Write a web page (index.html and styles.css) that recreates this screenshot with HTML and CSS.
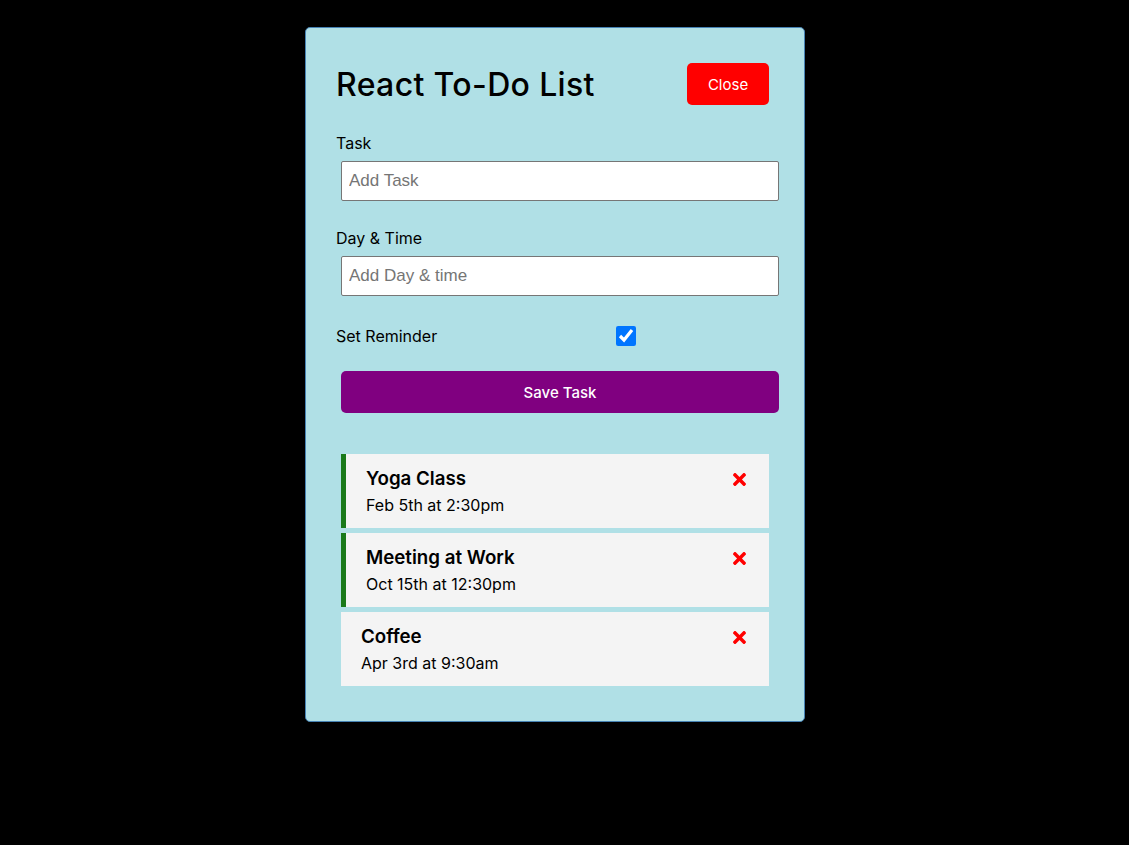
FILE: index.html
```html
<!DOCTYPE html>
<html lang="en">
<head>
<meta charset="utf-8">
<title>React To-Do List</title>
<link rel="stylesheet" href="styles.css">
</head>
<body>
<div class="container">
  <header class="header">
    <h1>React To-Do List</h1>
    <button class="btn btn-close">Close</button>
  </header>
  <form class="add-form">
    <div class="form-control">
      <label>Task</label>
      <input type="text" placeholder="Add Task">
    </div>
    <div class="form-control">
      <label>Day &amp; Time</label>
      <input type="text" placeholder="Add Day &amp; time">
    </div>
    <div class="form-control form-control-check">
      <label>Set Reminder</label>
      <div class="check-wrap"><input type="checkbox" checked></div>
    </div>
    <input type="submit" value="Save Task" class="btn btn-block">
  </form>
  <div class="task reminder">
    <h3>Yoga Class <svg class="times" viewBox="0 0 352 512"><path d="M242.72 256l100.07-100.07c12.28-12.28 12.28-32.19 0-44.48l-22.24-22.24c-12.28-12.28-32.19-12.28-44.48 0L176 189.28 75.93 89.21c-12.28-12.28-32.19-12.28-44.48 0L9.21 111.45c-12.28 12.28-12.28 32.19 0 44.48L109.28 256 9.21 356.07c-12.28 12.28-12.28 32.19 0 44.48l22.24 22.24c12.28 12.28 32.2 12.28 44.48 0L176 322.72l100.07 100.07c12.28 12.28 32.2 12.28 44.48 0l22.24-22.24c12.28-12.28 12.28-32.19 0-44.48L242.72 256z"/></svg></h3>
    <p>Feb 5th at 2:30pm</p>
  </div>
  <div class="task reminder">
    <h3>Meeting at Work <svg class="times" viewBox="0 0 352 512"><path d="M242.72 256l100.07-100.07c12.28-12.28 12.28-32.19 0-44.48l-22.24-22.24c-12.28-12.28-32.19-12.28-44.48 0L176 189.28 75.93 89.21c-12.28-12.28-32.19-12.28-44.48 0L9.21 111.45c-12.28 12.28-12.28 32.19 0 44.48L109.28 256 9.21 356.07c-12.28 12.28-12.28 32.19 0 44.48l22.24 22.24c12.28 12.28 32.2 12.28 44.48 0L176 322.72l100.07 100.07c12.28 12.28 32.2 12.28 44.48 0l22.24-22.24c12.28-12.28 12.28-32.19 0-44.48L242.72 256z"/></svg></h3>
    <p>Oct 15th at 12:30pm</p>
  </div>
  <div class="task">
    <h3>Coffee <svg class="times" viewBox="0 0 352 512"><path d="M242.72 256l100.07-100.07c12.28-12.28 12.28-32.19 0-44.48l-22.24-22.24c-12.28-12.28-32.19-12.28-44.48 0L176 189.28 75.93 89.21c-12.28-12.28-32.19-12.28-44.48 0L9.21 111.45c-12.28 12.28-12.28 32.19 0 44.48L109.28 256 9.21 356.07c-12.28 12.28-12.28 32.19 0 44.48l22.24 22.24c12.28 12.28 32.2 12.28 44.48 0L176 322.72l100.07 100.07c12.28 12.28 32.2 12.28 44.48 0l22.24-22.24c12.28-12.28 12.28-32.19 0-44.48L242.72 256z"/></svg></h3>
    <p>Apr 3rd at 9:30am</p>
  </div>
</div>
</body>
</html>
```
FILE: styles.css
```css
* {
  box-sizing: border-box;
  margin: 0;
  padding: 0;
}

body {
  background: #000;
  font-family: "Inter", "DejaVu Sans", sans-serif;
  color: #000;
  padding-right: 19px;
}

.container {
  width: 500px;
  margin: 27px auto;
  padding: 30px;
  background: #b0e0e6;
  border: 1px solid #4682b4;
  border-radius: 5px;
}

.header {
  display: flex;
  align-items: center;
  justify-content: space-between;
  margin-bottom: 21px;
}

.header h1 {
  font-size: 32px;
  font-weight: 500;
  letter-spacing: 0.35px;
  line-height: 48px;
  padding-top: 1px;
}

.btn {
  display: inline-block;
  border: none;
  border-radius: 5px;
  margin: 5px;
  padding: 11px 20px 9px;
  font-family: "Inter", "DejaVu Sans", sans-serif;
  font-size: 15px;
  line-height: 22px;
  color: #fff;
  cursor: pointer;
}

.btn-close {
  background: #ff0000;
  width: 82px;
  height: 42px;
}

.btn-block {
  display: block;
  width: 100%;
  height: 42px;
  background: #800080;
  font-weight: 500;
}

.form-control {
  display: flow-root;
  margin: 20px 0;
}

.form-control label {
  display: block;
  font-size: 16px;
  line-height: 24px;
}

.form-control input[type="text"] {
  display: block;
  width: 100%;
  height: 40px;
  margin: 6px 5px 5px;
  padding: 3px 7px;
  font-family: "Liberation Sans", Arial, sans-serif;
  font-size: 17px;
  border: 1px solid #767676;
  border-radius: 2px;
  background: #fff;
}

.form-control input[type="text"]::placeholder {
  color: #757575;
}

.form-control-check {
  display: flex;
  align-items: center;
  justify-content: space-between;
  height: 30px;
}

.form-control-check label {
  flex: 1;
}

.check-wrap {
  flex: 2;
  display: flex;
  justify-content: center;
  padding-right: 3px;
}

.check-wrap input {
  width: 20px;
  height: 20px;
  margin: 0;
  accent-color: #0075ff;
}

.add-form {
  margin-bottom: 41px;
}

.task {
  background: #f4f4f4;
  margin: 5px;
  padding: 11px 20px 9px;
  height: 74px;
  cursor: pointer;
}

.task.reminder {
  border-left: 5px solid #1a7a1a;
}

.task h3 {
  display: flex;
  align-items: center;
  justify-content: space-between;
  font-size: 18.72px;
  font-weight: 600;
  line-height: 28px;
}

.task p {
  font-size: 16px;
  line-height: 26px;
  margin-top: -1px;
}

.times {
  width: 13px;
  height: 19px;
  margin-right: 3px;
  fill: #ff0000;
}
```
